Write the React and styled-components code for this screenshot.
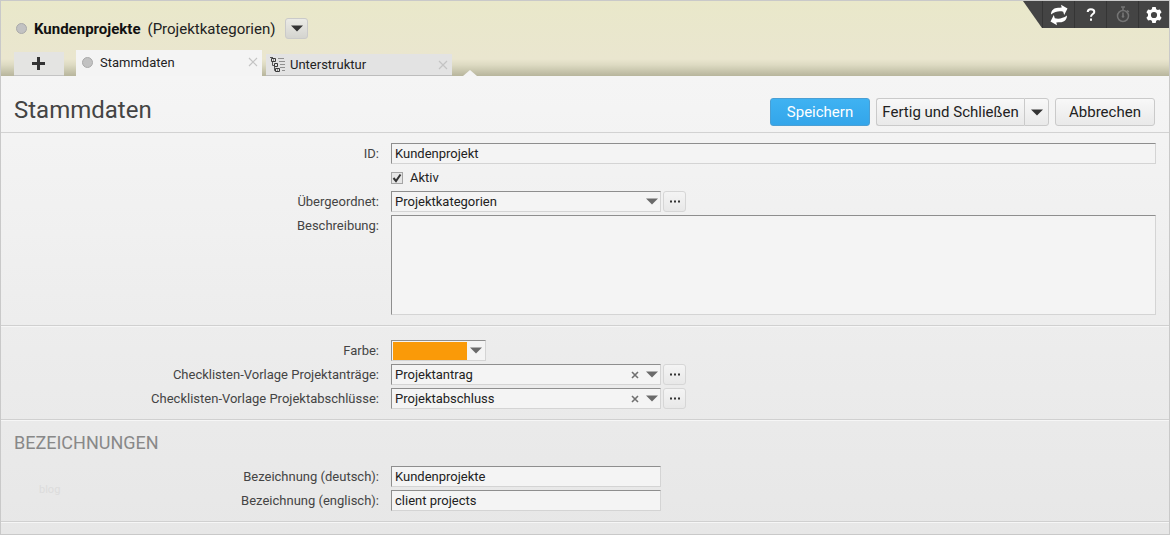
import React, { useState } from 'react'
import styled, { createGlobalStyle } from 'styled-components'

const GlobalStyle = createGlobalStyle`
  * {
    box-sizing: border-box;
  }
  body {
    margin: 0;
    font-family: Roboto, 'Liberation Sans', sans-serif;
    font-size: 13px;
    color: #222;
  }
  button,
  input,
  select,
  textarea {
    font: inherit;
    color: inherit;
  }
`

const ArrowDown = ({ color = '#6a6a6a' }) => (
  <svg width="12" height="7" viewBox="0 0 12 7" aria-hidden="true">
    <path d="M0 0.5h12L6 6.5z" fill={color} />
  </svg>
)

const CloseIcon = () => (
  <svg width="10" height="10" viewBox="0 0 10 10" aria-hidden="true">
    <path d="M1 1l8 8M9 1L1 9" stroke="#c4c4c4" strokeWidth="1.2" />
  </svg>
)

const ClearIcon = () => (
  <svg width="8" height="8" viewBox="0 0 8 8" aria-hidden="true">
    <path d="M1 1l6 6M7 1L1 7" stroke="#707070" strokeWidth="1.6" />
  </svg>
)

const PlusIcon = () => (
  <svg width="13" height="13" viewBox="0 0 13 13" aria-hidden="true">
    <path d="M6.5 0v13M0 6.5h13" stroke="#333" strokeWidth="3" />
  </svg>
)

const DotsIcon = () => (
  <svg width="12" height="3" viewBox="0 0 12 3" aria-hidden="true">
    <path d="M1 .5h2v2H1zM5 .5h2v2H5zM9 .5h2v2H9z" fill="#333" />
  </svg>
)

const TreeIcon = () => (
  <svg width="16" height="16" viewBox="0 0 16 16" fill="none" aria-hidden="true">
    <path d="M0 .5h3M2.5 4v4.5h2M4.5 9v4.500h1" stroke="#555" />
    <path
      d="M1.5 1.5h4v3h-4zM4.500 6.500h3v3h-3zM5.500 11.500h4v3h-4z"
      fill="#e3e3e3"
      stroke="#3a3a3a"
    />
    <path d="M3 3h1M7 13h1" stroke="#3a3a3a" />
    <path
      d="M8 1.500h6M9 4.500h6M10 7.500h5M10 10.500h5M12 13.500h3"
      stroke="#909090"
    />
  </svg>
)

const RefreshIcon = () => (
  <svg width="18" height="22" viewBox="0 0 18 22" aria-hidden="true">
    <g fill="#fff">
      <path d="M1 10.500C1 6 4.500 3.100 9.500 3.800l2.200-.3L11 .8l6.500 3.600-3.300 6.600-1-3.200C9.500 6.800 5 7.500 1 10.500z" />
      <path d="M17 11.500c0 4.500-3.500 7.400-8.500 6.700l-2.200.3.700 2.700L.5 17.600 3.800 11l1 3.200c3.700 1 8.200.3 12.200-2.700z" />
    </g>
  </svg>
)

const QuestionIcon = () => (
  <svg width="10" height="13" viewBox="0 0 10 13" fill="none" aria-hidden="true">
    <path
      d="M1.7 4C1.7 2 3 1.2 4.9 1.2c2 0 3.400 1 3.400 2.700C8.300 6 5 6.200 5 8.800"
      stroke="#fff"
      strokeWidth="2"
    />
    <path d="M4 10.500h2v2.300H4z" fill="#fff" />
  </svg>
)

const StopwatchIcon = () => (
  <svg width="14" height="17" viewBox="0 0 14 17" fill="none" aria-hidden="true">
    <circle cx="7" cy="10" r="5.5" stroke="#747474" strokeWidth="1.5" />
    <path
      d="M5 1h4M7 1v3.500M11 4.500l1.800 1.500M7 6.500v4"
      stroke="#747474"
      strokeWidth="1.6"
    />
    <circle cx="7" cy="10.5" r="1.3" fill="#747474" />
  </svg>
)

const GearIcon = () => (
  <svg width="16" height="16" viewBox="0 0 16 16" aria-hidden="true">
    <path
      fill="#fff"
      fillRule="evenodd"
      d="M6.300 0h3.400l.5 2.200 1.500.9 2.200-.7 1.700 2.900L14 6.900v2.200l1.600 1.600-1.700 2.900-2.200-.7-1.500.9-.5 2.200H6.300l-.5-2.200-1.500-.9-2.200.7-1.700-2.900L2 9.100V6.900L.4 5.300l1.700-2.900 2.200.7 1.500-.9zM8 4.900a3.100 3.100 0 1 0 0 6.200 3.100 3.100 0 0 0 0-6.200z"
    />
  </svg>
)

const LookupField = ({ id, label, value, clearable }) => (
  <Row>
    <Label htmlFor={id}>{label}</Label>
    <FieldGroup>
      <FieldFrame>
        <Select id={id} defaultValue={value}>
          <option>{value}</option>
        </Select>
        {clearable && (
          <ClearButton type="button" aria-label="Leeren">
            <ClearIcon />
          </ClearButton>
        )}
        <ArrowDown />
      </FieldFrame>
      <MoreButton type="button" aria-label="Auswahl">
        <DotsIcon />
      </MoreButton>
    </FieldGroup>
  </Row>
)

const TextField = ({ id, label, value, wide }) => (
  <Row>
    <Label htmlFor={id}>{label}</Label>
    <TextInput id={id} defaultValue={value} $wide={wide} />
  </Row>
)

const App = () => {
  const [active, setActive] = useState(true)
  const [color, setColor] = useState('#fa9a08')

  return (
    <Window>
      <GlobalStyle />
      <Header>
        <HeaderTop>
          <Title>
            <Dot />
            <TitleText>
              <strong>Kundenprojekte</strong>
              <span>(Projektkategorien)</span>
            </TitleText>
            <TitleMenuButton type="button" aria-label="Menü">
              <ArrowDown color="#333" />
            </TitleMenuButton>
          </Title>
          <Toolbar>
            <ToolbarEdge />
            <ToolButton type="button" aria-label="Aktualisieren">
              <RefreshIcon />
            </ToolButton>
            <ToolButton type="button" aria-label="Hilfe">
              <QuestionIcon />
            </ToolButton>
            <ToolButton type="button" aria-label="Stoppuhr">
              <StopwatchIcon />
            </ToolButton>
            <ToolButton type="button" aria-label="Einstellungen">
              <GearIcon />
            </ToolButton>
          </Toolbar>
        </HeaderTop>
        <Tabs>
          <AddTab type="button" aria-label="Neuer Tab">
            <PlusIcon />
          </AddTab>
          <Tab $active>
            <TabButton type="button" $gap={7}>
              <Dot />
              Stammdaten
            </TabButton>
            <TabClose type="button" aria-label="Schließen">
              <CloseIcon />
            </TabClose>
          </Tab>
          <Tab>
            <TabButton type="button" $gap={4}>
              <TreeIcon />
              Unterstruktur
            </TabButton>
            <TabClose type="button" aria-label="Schließen">
              <CloseIcon />
            </TabClose>
          </Tab>
          <TabNotch />
        </Tabs>
      </Header>
      <Content>
        <PageHead>
          <PageTitle>Stammdaten</PageTitle>
          <Actions>
            <PrimaryButton type="button">Speichern</PrimaryButton>
            <SplitButton>
              <SplitMain type="button">Fertig und Schließen</SplitMain>
              <SplitToggle type="button" aria-label="Weitere Aktionen">
                <ArrowDown color="#333" />
              </SplitToggle>
            </SplitButton>
            <ActionButton type="button">Abbrechen</ActionButton>
          </Actions>
        </PageHead>
        <Section $top={10}>
          <TextField id="ident" label="ID:" value="Kundenprojekt" wide />
          <Row>
            <CheckLabel>
              <Checkbox
                type="checkbox"
                checked={active}
                onChange={() => setActive(!active)}
              />
              Aktiv
            </CheckLabel>
          </Row>
          <LookupField
            id="parent"
            label="Übergeordnet:"
            value="Projektkategorien"
          />
          <Row>
            <Label htmlFor="description">Beschreibung:</Label>
            <TextArea id="description" />
          </Row>
        </Section>
        <Section $top={14}>
          <Row>
            <Label htmlFor="color">Farbe:</Label>
            <ColorFrame>
              <ColorInput
                id="color"
                type="color"
                value={color}
                onChange={(e) => setColor(e.target.value)}
              />
              <ArrowDown />
            </ColorFrame>
          </Row>
          <LookupField
            id="request"
            label="Checklisten-Vorlage Projektanträge:"
            value="Projektantrag"
            clearable
          />
          <LookupField
            id="closing"
            label="Checklisten-Vorlage Projektabschlüsse:"
            value="Projektabschluss"
            clearable
          />
        </Section>
        <Section $top={12}>
          <SectionTitle>Bezeichnungen</SectionTitle>
          <TextField
            id="nameDe"
            label="Bezeichnung (deutsch):"
            value="Kundenprojekte"
          />
          <TextField
            id="nameEn"
            label="Bezeichnung (englisch):"
            value="client projects"
          />
          <Watermark>blog</Watermark>
        </Section>
      </Content>
    </Window>
  )
}

const Window = styled.div`
  display: flex;
  flex-direction: column;
  min-height: 100vh;
  border: 1px solid #c9c9c9;
`

const Header = styled.header`
  background: linear-gradient(
    #e9e8ca 0,
    #eae6cf 58px,
    #dddac2 64px,
    #b7b59c 75px
  );
`
const HeaderTop = styled.div`
  display: flex;
  justify-content: space-between;
  align-items: flex-start;
  height: 49px;
`
const Title = styled.div`
  display: flex;
  align-items: center;
  height: 55px;
  padding-left: 15px;
`
const TitleText = styled.div`
  display: flex;
  gap: 7px;
  margin: 0 10px 0 7px;
  font-size: 15px;
  color: #222;
  strong {
    color: #111;
  }
`
const Dot = styled.span`
  flex: none;
  width: 11px;
  height: 11px;
  border: 1px solid #aaa;
  border-radius: 50%;
  background-color: #c2c2c2;
`
const GreyButton = styled.button`
  display: flex;
  align-items: center;
  justify-content: center;
  padding: 0;
  border: 1px solid #cacaca;
  border-radius: 3px;
  background: linear-gradient(#f8f8f8, #e9e9e9);
  cursor: pointer;
`
const TitleMenuButton = styled(GreyButton)`
  width: 23px;
  height: 21px;
  background: linear-gradient(#ebebe6, #d4d4cf);
`

const Toolbar = styled.div`
  display: flex;
  height: 27px;
`
const ToolbarEdge = styled.div`
  width: 19px;
  background-color: #444;
  clip-path: polygon(0 0, 100% 0, 100% 100%);
`
const ToolButton = styled.button`
  display: flex;
  align-items: center;
  justify-content: center;
  width: 32px;
  padding: 0;
  border: none;
  border-left: 1px solid #353535;
  background-color: #444;
  cursor: pointer;
  &:last-child {
    width: 31px;
  }
`

const Tabs = styled.nav`
  display: flex;
  align-items: flex-end;
  height: 26px;
  padding-left: 13px;
`
const AddTab = styled.button`
  display: flex;
  align-items: center;
  justify-content: center;
  width: 50px;
  height: 24px;
  margin-right: 12px;
  padding: 0 1px 0 0;
  border: none;
  border-bottom: 1px solid #c4c4c4;
  background-color: #e4e4e2;
  cursor: pointer;
`
const Tab = styled.div`
  display: flex;
  align-items: center;
  width: 186px;
  height: ${(props) => (props.$active ? 26 : 22)}px;
  margin-right: 4px;
  padding: ${(props) => (props.$active ? '0 4px 2px 6px' : '0 4px')};
  border-bottom: ${(props) => (props.$active ? 'none' : '1px solid #bdbdbd')};
  background-color: ${(props) => (props.$active ? '#f4f4f4' : '#e3e3e3')};
`
const TabButton = styled.button`
  display: flex;
  flex: 1;
  align-items: center;
  gap: ${(props) => props.$gap}px;
  height: 22px;
  padding: 0;
  border: none;
  background: none;
  text-align: left;
  cursor: pointer;
`
const TabClose = styled.button`
  display: flex;
  padding: 0;
  border: none;
  background: none;
  cursor: pointer;
`
const TabNotch = styled.div`
  width: 14px;
  height: 6px;
  margin-left: 7px;
  background-color: #f4f4f4;
  clip-path: polygon(50% 0, 100% 100%, 0 100%);
`

const Content = styled.main`
  flex: 1;
  background: linear-gradient(#f5f5f5, #f1f1f1 28%, #ececec 60%, #e7e7e7);
`
const PageHead = styled.div`
  display: flex;
  align-items: center;
  justify-content: space-between;
  height: 57px;
  padding: 12px 14px 0 13px;
  border-bottom: 1px solid #d2d2d2;
`
const PageTitle = styled.h1`
  margin: 0;
  font-size: 24px;
  font-weight: 400;
  line-height: 28px;
  color: #444;
`
const Actions = styled.div`
  display: flex;
  gap: 6px;
  margin-top: 3px;
`
const ActionButton = styled(GreyButton)`
  width: 100px;
  height: 28px;
  padding-top: 1px;
  font-size: 15px;
`
const PrimaryButton = styled(ActionButton)`
  border-color: #4a9fd4;
  background: linear-gradient(#3fb2f2, #33a5ea);
  color: #fff;
`
const SplitButton = styled.div`
  display: flex;
`
const SplitMain = styled(ActionButton)`
  width: 148px;
  border-right: none;
  border-radius: 3px 0 0 3px;
`
const SplitToggle = styled(ActionButton)`
  width: 25px;
  border-radius: 0 3px 3px 0;
`

const Section = styled.section`
  position: relative;
  display: flex;
  flex-direction: column;
  gap: 3px;
  padding: ${(props) => props.$top}px 13px 10px 0;
  border-bottom: 1px solid #d0d0d0;
  box-shadow: 0 1px 0 #f6f6f6;
`
const SectionTitle = styled.h2`
  margin: 0 0 9px 13px;
  font-size: 18px;
  font-weight: 400;
  line-height: 22px;
  color: #888;
  text-transform: uppercase;
`
const Row = styled.div`
  display: grid;
  grid-template-columns: 378px 1fr;
  column-gap: 12px;
`
const Label = styled.label`
  line-height: 21px;
  text-align: right;
  color: #444;
`
const FieldGroup = styled.div`
  display: flex;
  gap: 2px;
`
const fieldBorder = `
  border: 1px solid #d4d4d4;
  border-top-color: #8e8e8e;
  border-left-color: #8e8e8e;
  background-color: #f4f4f4;
`
const FieldFrame = styled.div`
  display: flex;
  align-items: center;
  width: 270px;
  height: 21px;
  padding-right: 2px;
  ${fieldBorder}
`
const Select = styled.select`
  flex: 1;
  height: 19px;
  padding: 0 3px;
  border: none;
  background: none;
  appearance: none;
`
const ClearButton = styled.button`
  display: flex;
  margin-right: 7px;
  padding: 0;
  border: none;
  background: none;
  cursor: pointer;
`
const MoreButton = styled(GreyButton)`
  width: 23px;
  height: 21px;
  border-color: #d6d6d6;
  background: linear-gradient(#f4f4f4, #e8e8e8);
`
const TextInput = styled.input`
  width: ${(props) => (props.$wide ? '100%' : '270px')};
  height: 21px;
  padding: 0 3px;
  ${fieldBorder}
`
const TextArea = styled.textarea`
  display: block;
  width: 100%;
  height: 100px;
  padding: 3px;
  resize: none;
  ${fieldBorder}
`
const CheckLabel = styled.label`
  display: flex;
  grid-column: 2;
  align-items: center;
  gap: 7px;
  height: 21px;
`
const Checkbox = styled.input`
  width: 12px;
  height: 12px;
  margin: 0;
  border: 1px solid #a5a5a5;
  background: #e6e6e6;
  appearance: none;
  &:checked {
    background: #e6e6e6
      url("data:image/svg+xml,%3Csvg xmlns='http://www.w3.org/2000/svg' viewBox='0 0 10 10'%3E%3Cpath d='M1.5 5l2.5 3L8.500 1.500' fill='none' stroke='%23333' stroke-width='2'/%3E%3C/svg%3E");
  }
`
const ColorFrame = styled.div`
  display: flex;
  align-items: center;
  justify-content: space-between;
  width: 95px;
  height: 21px;
  padding-right: 3px;
  ${fieldBorder}
`
const ColorInput = styled.input`
  width: 75px;
  height: 19px;
  padding: 1px 0 0 1px;
  border: none;
  background: none;
  appearance: none;
  &::-webkit-color-swatch-wrapper {
    padding: 0;
  }
  &::-webkit-color-swatch {
    border: none;
  }
`
const Watermark = styled.span`
  position: absolute;
  bottom: 25px;
  left: 38px;
  font-size: 11px;
  line-height: 12px;
  color: #dcdcdc;
`

export default App
